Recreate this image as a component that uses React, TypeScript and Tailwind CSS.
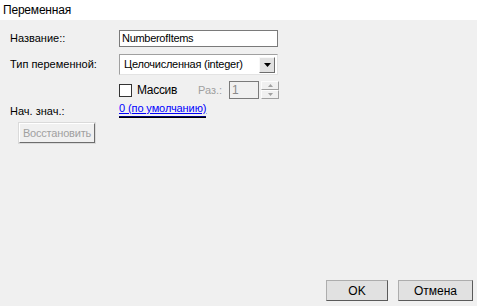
import React from "react";

const font = { fontFamily: '"Liberation Sans", Arial, sans-serif' };

export default function App() {
  return (
    <div
      className="w-[477px] h-[306px] bg-[#f0f0f0] flex flex-col text-[11px] text-black overflow-hidden"
      style={font}
    >
      <div className="h-[20px] bg-white flex items-center pl-[3px] text-[12px] tracking-[-0.2px] shrink-0">
        Переменная
      </div>
      <div className="flex-1 flex flex-col relative">
        {/* Row 1 */}
        <div className="flex items-center mt-[10px] h-[17px]">
          <div className="w-[119px] pl-[10px]">Название::</div>
          <div className="w-[159px] h-[17px] bg-white border border-[#7a7a7a] flex items-center pl-[2px] tracking-[-0.3px]">
            NumberofItems
          </div>
        </div>
        {/* Row 2 */}
        <div className="flex items-center mt-[7px] h-[21px]">
          <div className="w-[119px] pl-[10px]">Тип переменной:</div>
          <div className="w-[159px] h-[21px] bg-white border border-[#a0a0a0] border-r-[#e3e3e3] border-b-[#e3e3e3] flex items-center justify-between pl-[4px] pr-[2px]">
            <span className="text-[11px] tracking-[-0.25px]">Целочисленная (integer)</span>
            <div className="w-[16px] h-[16px] bg-[#e1e1e1] border border-[#f8f8f8] border-r-[#6d6d6d] border-b-[#6d6d6d] flex items-center justify-center">
              <svg width="7" height="4" viewBox="0 0 7 4">
                <polygon points="0,0 7,0 3.5,4" fill="#000" />
              </svg>
            </div>
          </div>
        </div>
        {/* Row 3 */}
        <div className="flex items-center mt-[6px] h-[18px] pl-[119px]">
          <div className="w-[13px] h-[13px] bg-white border border-[#333]" />
          <span className="ml-[5px] w-[61px] text-[12px] tracking-[-0.3px]">Массив</span>
          <span className="w-[31px] text-[#a0a0a0] text-[11px]">Раз.:</span>
          <div className="w-[30px] h-[18px] bg-[#f0f0f0] border border-[#7a7a7a] flex items-center pl-[2px] text-[#8a8a8a] text-[12px]">
            1
          </div>
          <div className="ml-[2px] w-[18px] h-[18px] flex flex-col">
            <div className="flex-1 bg-[#f0f0f0] border border-[#fcfcfc] border-r-[#a0a0a0] border-b-[#a0a0a0] flex items-center justify-center">
              <svg width="5" height="3" viewBox="0 0 5 3">
                <polygon points="2.5,0 5,3 0,3" fill="#a0a0a0" />
              </svg>
            </div>
            <div className="flex-1 bg-[#f0f0f0] border border-[#fcfcfc] border-r-[#a0a0a0] border-b-[#a0a0a0] flex items-center justify-center">
              <svg width="5" height="3" viewBox="0 0 5 3">
                <polygon points="0,0 5,0 2.5,3" fill="#a0a0a0" />
              </svg>
            </div>
          </div>
        </div>
        {/* Row 4 */}
        <div className="flex items-start mt-[3px] h-[16px]">
          <div className="w-[119px] pl-[10px] pt-[1px]">Нач. знач.:</div>
          <div className="flex flex-col">
            <span className="text-[#0000ff] underline underline-offset-[1px] text-[11px] leading-[13px] tracking-[-0.1px]">
              0 (по умолчанию)
            </span>
            <div className="h-[1px] bg-[#000080] mt-[1px]" />
            <div className="h-[1px] bg-[#000000]" />
          </div>
        </div>
        {/* Restore button */}
        <div className="mt-[5px] pl-[19px]">
          <div className="w-[76px] h-[20px] bg-[#f0f0f0] border border-[#ffffff] border-r-[#6d6d6d] border-b-[#6d6d6d] flex items-center justify-center text-[#a0a0a0] text-[11px] tracking-[-0.2px] outline outline-1 outline-[#dadada]">
            Восстановить
          </div>
        </div>
        <div className="flex-1" />
        {/* Bottom buttons */}
        <div className="flex justify-end gap-[10px] pr-[4px] mb-[5px]">
          <div className="w-[62px] h-[21px] bg-[#e1e1e1] border border-[#adadad] border-r-[#5a5a5a] border-b-[#5a5a5a] flex items-center justify-center text-[12px]">
            OK
          </div>
          <div className="w-[75px] h-[21px] bg-[#e1e1e1] border border-[#adadad] border-r-[#5a5a5a] border-b-[#5a5a5a] flex items-center justify-center text-[12px]">
            Отмена
          </div>
        </div>
      </div>
    </div>
  );
}
